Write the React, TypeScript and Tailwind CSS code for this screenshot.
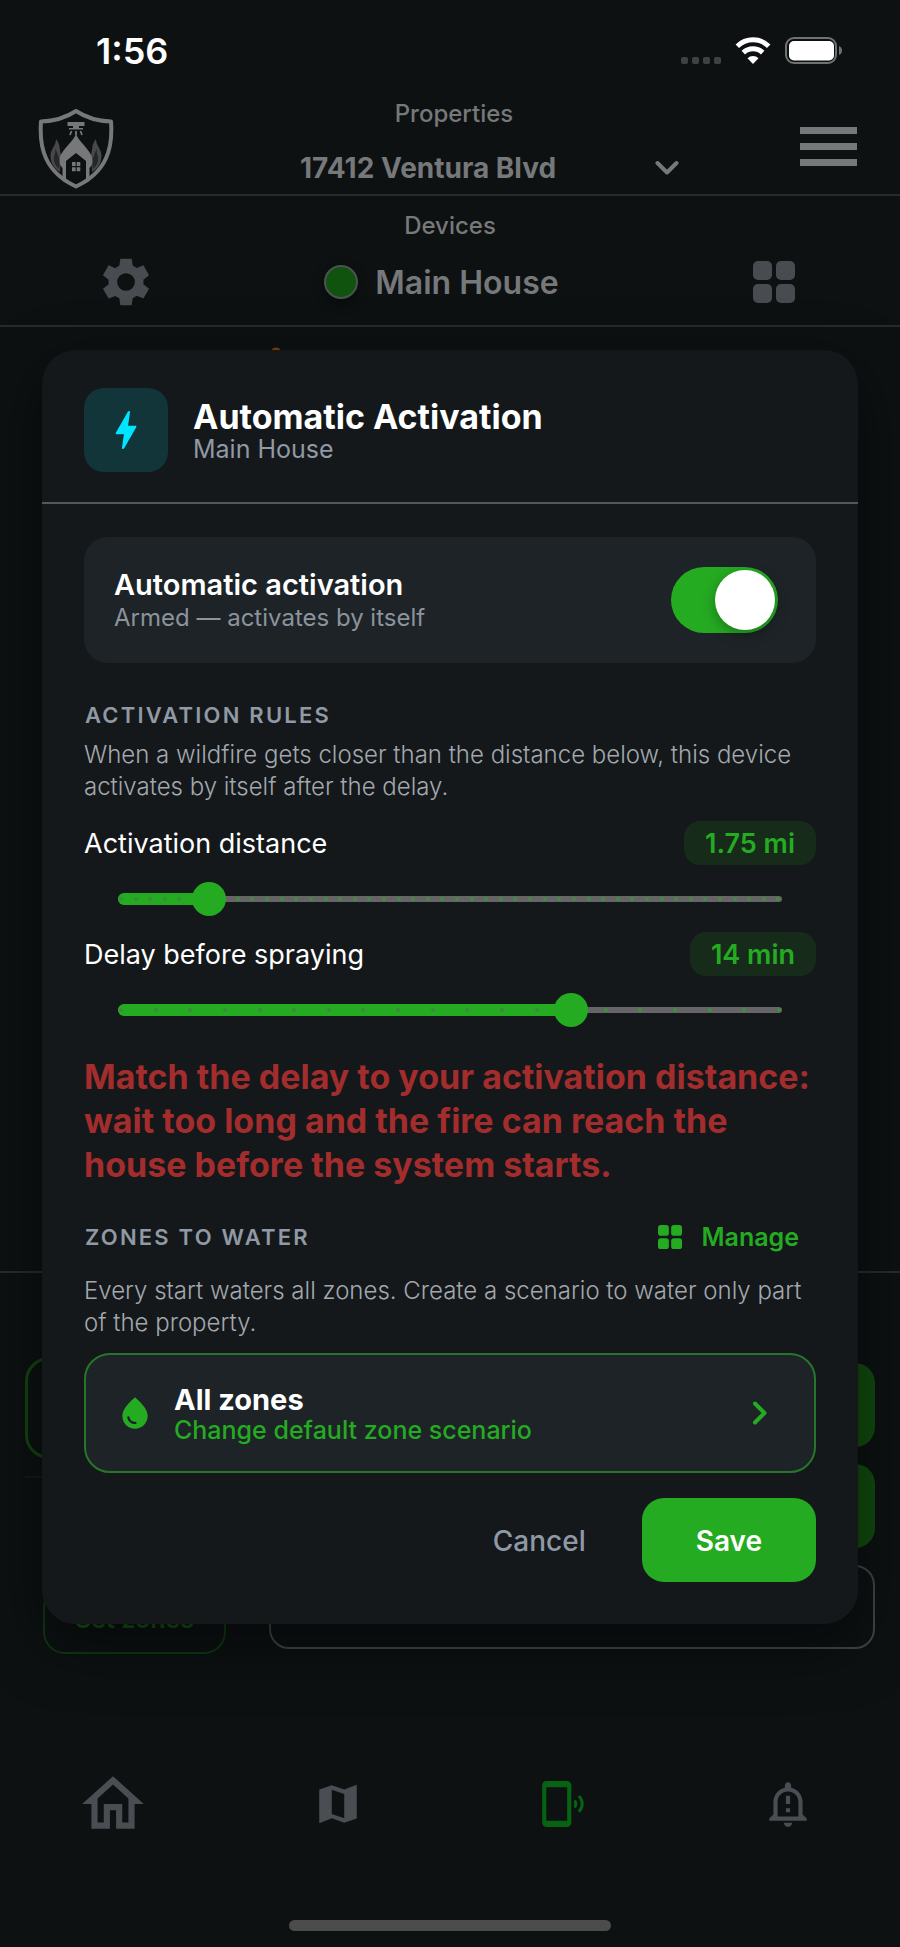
import { useState } from 'react'
import { MdBolt, MdOutlineHome, MdOutlineNotificationImportant, MdPhonelinkRing, MdWaterDrop } from 'react-icons/md'

const GridIcon = (props: any) => {
	const { className } = props

	return (
		<svg viewBox="0 0 42 42" className={className} fill="currentColor" aria-hidden="true">
			<rect x="0" y="0" width="19" height="19" rx="5" />
			<rect x="23" y="0" width="19" height="19" rx="5" />
			<rect x="0" y="23" width="19" height="19" rx="5" />
			<rect x="23" y="23" width="19" height="19" rx="5" />
		</svg>
	)
}

const GearIcon = () => (
	<svg viewBox="0 0 24 24" className="size-14" fill="currentColor" aria-hidden="true">
		<path fillRule="evenodd" d="M19.430 12.990c.04-.33.08-.67.08-1.010 0-.34-.03-.66-.07-.97l2.450-1.920-2.430-4.220-2.870 1.160c-.52-.4-1.090-.74-1.700-1L14.440 2H9.570l-.44 3.070c-.61.26-1.180.6-1.700 1L4.550 4.870 2.110 9.090l2.450 1.920c-.04.33-.07.65-.07.99 0 .34.03.68.08 1.010l-2.430 1.910 2.430 4.200 2.880-1.150c.52.4 1.090.74 1.700 1L9.580 22h4.850l.44-3.070c.61-.26 1.190-.6 1.710-1l2.880 1.150 2.430-4.200zM12 15.800a3.800 3.800 0 1 1 0-7.600 3.800 3.800 0 0 1 0 7.600z" />
	</svg>
)

const MapIcon = () => (
	<svg viewBox="0 0 24 24" className="size-[50px]" fill="currentColor" aria-hidden="true">
		<path d="M15 5.1 9 3 3 5.02v16.2l6-2.33 6 2.1 6-2.02V2.77L15 5.1zm0 13.79-6-2.11V5.11l6 2.11v11.67z" />
	</svg>
)

const Logo = () => (
	<svg viewBox="0 0 76 82" className="h-[82px] w-[76px]" role="img" aria-label="Home">
		<path d="M38 3C29 9 17 13 3 13.500C1 40 7 64 38 78.500C69 64 75 40 73 13.500C59 13 47 9 38 3Z" fill="none" stroke="#77787a" strokeWidth="4" strokeLinejoin="round" />
		<path d="M29.500 14h17v4h-17zM35 18h6v2h4v1.500H31V20h4z" fill="#77787a" />
		<path d="M33.500 23l-1.500 4M38 23v4M42.500 23l1.500 4" stroke="#77787a" strokeWidth="1.800" />
		<path d="M18 31c0 7-6 10-5.500 18C13 56 17 61 22 64l1-18c-2-5 0-9-5-15z" fill="#464849" />
		<path d="M58 31c0 7 6 10 5.500 18C63 56 59 61 54 64l-1-18c2-5 0-9 5-15z" fill="#464849" />
		<path d="M17 41c1 5-2 7-1 12 1 4 3 6 5 8l1-10c-3-3-2-7-5-10zM59 41c-1 5 2 7 1 12-1 4-3 6-5 8l-1-10c3-3 2-7 5-10z" fill="#25282a" />
		<path d="M38 25c-1 8-16 17-16.500 27 0 4 1 6 3 8v13l3.500 2V53l10-8 10 8v22l3.500-2V60c2-2 3-4 3-8C54 42 39 33 38 25Z" fill="#77787a" />
		<path d="M34 54h3.600v4H34zM38.700 54h3.600v4h-3.600zM34 59.200h3.600v4H34zM38.700 59.200h3.600v4h-3.600z" fill="#77787a" />
	</svg>
)

const StatusBar = () => (
	<div className="flex h-24 items-start justify-between pt-[31px] pr-[57px] pl-[96px] text-white">
		<span className="text-[36px] leading-10 font-semibold">1:56</span>
		<div className="flex items-end gap-[14px] pt-[6px]">
			<div className="flex gap-1">
				<span className="size-[7px] rounded-[2px] bg-[#3f4243]" />
				<span className="size-[7px] rounded-[2px] bg-[#3f4243]" />
				<span className="size-[7px] rounded-[2px] bg-[#3f4243]" />
				<span className="size-[7px] rounded-[2px] bg-[#3f4243]" />
			</div>
			<svg viewBox="0 0 36 27" className="h-[27px] w-9" fill="none" stroke="#fff" strokeWidth="5" aria-hidden="true">
				<path d="M2.300 9.200a22.500 22.500 0 0 1 31.400 0" />
				<path d="M8.300 15.600a14 14 0 0 1 19.400 0" />
				<path d="M18 27l-5.500-5.700a8 8 0 0 1 11 0z" fill="#fff" stroke="none" />
			</svg>
			<svg viewBox="0 0 58 27" className="h-[27px] w-[58px]" aria-hidden="true">
				<rect x="1" y="1" width="50" height="25" rx="8" fill="none" stroke="#6f7273" strokeWidth="2" />
				<rect x="4" y="4" width="45" height="19.500" rx="5" fill="#fff" />
				<path d="M54 9c4 1.500 4 7.500 0 9z" fill="#6f7273" />
			</svg>
		</div>
	</div>
)

const RuleSlider = (props: any) => {
	const { id, label, unit, min, max, step, value, onChange } = props
	const count = Math.round((max - min) / step)
	const index = Math.round((value - min) / step)
	const ticks = Array.from({ length: count + 1 }, (_, i) => i)

	return (
		<div>
			<div className="flex items-center justify-between">
				<label htmlFor={id} className="pt-[2px] text-[27px] leading-8 text-white">{label}</label>
				<output htmlFor={id} className="rounded-2xl bg-[#172b1b] px-[21px] pt-[7px] pb-[5px] text-[27px] leading-8 font-semibold text-[#25ab22]">
					{value} {unit}
				</output>
			</div>
			<div className="relative mx-5 mt-[17px] h-[34px]">
				<div className="absolute inset-x-[14px] top-[14px] h-[6px] rounded-full bg-[#656567]" />
				<div className="absolute inset-x-[14px] top-[11px] h-3">
					<div className="h-3 rounded-full bg-[#25ab22]" style={{ width: `${(index / count) * 100}%` }} />
				</div>
				<div className="absolute inset-x-[15px] top-[15px] flex justify-between">
					{ticks.map((i) => (
						<span key={i} className={i < index ? 'size-1 rounded-full bg-[#3f8a3d]' : 'size-1 rounded-full bg-[#3f8f40]'} />
					))}
				</div>
				<input
					id={id}
					type="range"
					min={min}
					max={max}
					step={step}
					value={value}
					onChange={(e) => { onChange(Number(e.target.value)) }}
					className="absolute inset-0 m-0 h-[34px] w-full cursor-pointer appearance-none bg-transparent [&::-webkit-slider-thumb]:size-[34px] [&::-webkit-slider-thumb]:appearance-none [&::-webkit-slider-thumb]:rounded-full [&::-webkit-slider-thumb]:bg-[#25ab22]"
				/>
			</div>
		</div>
	)
}

const ActivationDialog = () => {
	const [armed, setArmed] = useState(true)
	const [distance, setDistance] = useState(1.75)
	const [delay, setDelay] = useState(14)

	return (
		<div
			role="dialog"
			aria-labelledby="dialog-title"
			className="w-full rounded-[34px] bg-[#14181b] shadow-[0_20px_60px_rgba(0,0,0,0.5)]"
		>
			<div className="flex items-center gap-[25px] border-b-2 border-[#55585a] px-[42px] pt-[38px] pb-[30px]">
				<div className="flex size-[84px] shrink-0 items-center justify-center rounded-[20px] bg-[#12353a] text-[#00e5ff]">
					<MdBolt className="size-[50px]" />
				</div>
				<div className="pt-[2px]">
					<h1 id="dialog-title" className="text-[34px] leading-9 font-bold text-white">Automatic Activation</h1>
					<p className="text-[25px] leading-7 text-[#9099a4]">Main House</p>
				</div>
			</div>

			<div className="px-[42px] pt-[33px] pb-[42px]">
				<div className="flex items-center justify-between rounded-3xl bg-[#1d2327] py-[30px] pr-[38px] pl-[30px]">
					<label htmlFor="armed">
						<span className="block text-[29px] leading-9 font-semibold text-white">Automatic activation</span>
						<span className="block text-[24px] leading-[30px] text-[#8b939d]">Armed — activates by itself</span>
					</label>
					<div className="relative h-[66px] w-[107px] shrink-0">
						<input
							id="armed"
							type="checkbox"
							checked={armed}
							onChange={(e) => { setArmed(e.target.checked) }}
							className="peer block h-full w-full cursor-pointer appearance-none rounded-full bg-[#4b5054] checked:bg-[#25ab22]"
						/>
						<span className="pointer-events-none absolute top-[3px] left-[3px] size-[60px] rounded-full bg-white shadow-[0_4px_14px_rgba(0,0,0,0.3)] peer-checked:left-[44px]" />
					</div>
				</div>

				<h2 className="mt-[38px] pl-[1px] text-[22px] leading-7 font-semibold tracking-widest text-[#9099a4]">ACTIVATION RULES</h2>
				<p className="mt-[10px] text-[24px] leading-8 font-light text-[#a3a8ae]">
					When a wildfire gets closer than the distance below, this device activates by itself after the delay.
				</p>

				<div className="mt-[18px] flex flex-col gap-4">
					<RuleSlider id="distance" label="Activation distance" unit="mi" min={0.25} max={11.5} step={0.25} value={distance} onChange={setDistance} />
					<RuleSlider id="delay" label="Delay before spraying" unit="min" min={1} max={20} step={1} value={delay} onChange={setDelay} />
				</div>

				<p className="mt-7 text-[34px] leading-[44px] font-bold text-[#a32d2d]">
					Match the delay to your activation distance: wait too long and the fire can reach the house before the system starts.
				</p>

				<div className="mt-[26px] flex items-center justify-between">
					<h2 className="pl-[1px] text-[22px] leading-7 font-semibold tracking-widest text-[#9099a4]">ZONES TO WATER</h2>
					<button type="button" className="flex h-12 items-center gap-5 pr-[17px] text-[25px] leading-8 font-semibold text-[#25ab22]">
						<GridIcon className="size-6" />
						Manage
					</button>
				</div>
				<p className="mt-[14px] text-[24px] leading-8 font-light text-[#a3a8ae]">
					Every start waters all zones. Create a scenario to water only part of the property.
				</p>

				<button type="button" className="mt-[14px] flex h-[120px] w-full items-center gap-5 rounded-[26px] border-2 border-[#26762a] bg-[#1d2327] pr-[46px] pl-[30px] text-left">
					<MdWaterDrop className="size-[38px] shrink-0 text-[#25ab22]" />
					<span className="flex-1 pt-[2px]">
						<span className="block text-[29px] leading-8 font-bold text-white">All zones</span>
						<span className="block text-[25px] leading-7 font-medium text-[#25ab22]">Change default zone scenario</span>
					</span>
					<svg viewBox="0 0 16 24" className="h-6 w-4" fill="none" stroke="#25ab22" strokeWidth="4" strokeLinecap="round" strokeLinejoin="round" aria-hidden="true">
						<path d="M3 2.500 12.500 12 3 21.500" />
					</svg>
				</button>

				<div className="mt-[25px] flex justify-end gap-4">
					<button type="button" className="h-[84px] px-10 pt-[2px] text-[28px] font-medium text-[#8f98a5]">Cancel</button>
					<button type="button" className="h-[84px] rounded-[22px] bg-[#25ab22] px-[54px] pt-[2px] text-[28px] font-semibold text-white">Save</button>
				</div>
			</div>
		</div>
	)
}

export default function App() {
	return (
		<div className="relative flex min-h-screen flex-col bg-[#0d1112] font-['Inter',sans-serif] text-[#77787a]">
			<StatusBar />

			<header className="flex h-[100px] items-start border-b-2 border-[#282b2c] pr-[39px] pl-[38px]">
				<a href="#home" className="pt-3">
					<Logo />
				</a>
				<div className="flex flex-1 flex-col items-center gap-5 pt-[2px] pr-[2px]">
					<label htmlFor="property" className="text-[24px] leading-8 font-medium">Properties</label>
					<div className="relative w-full max-w-[466px]">
						<select id="property" className="block h-9 w-full appearance-none bg-transparent pl-[79px] text-[28px] leading-9 font-bold">
							<option>17412 Ventura Blvd</option>
						</select>
						<svg viewBox="0 0 24 16" className="pointer-events-none absolute top-[10px] right-2 h-4 w-6" fill="none" stroke="currentColor" strokeWidth="4" strokeLinecap="round" strokeLinejoin="round" aria-hidden="true">
							<path d="M2.500 3 12 12.500 21.500 3" />
						</svg>
					</div>
				</div>
				<button type="button" aria-label="Menu" className="mt-[31px] flex w-[65px] flex-col gap-[9px] px-1">
					<span className="h-[7px] w-full bg-current" />
					<span className="h-[7px] w-full bg-current" />
					<span className="h-[7px] w-full bg-current" />
				</button>
			</header>

			<section className="flex flex-col gap-3 border-b-2 border-[#282b2c] px-[98px] pt-[14px] pb-[15px]">
				<h2 className="text-center text-[24px] leading-8 font-medium">Devices</h2>
				<div className="flex items-center justify-between text-[#484b50]">
					<button type="button" aria-label="Settings">
						<GearIcon />
					</button>
					<div className="flex items-center gap-[17px] pr-[17px] text-[#77787a]">
						<span className="size-[34px] rounded-full border-2 border-[#4b5250] bg-[#10530e] shadow-[0_4px_12px_rgba(0,0,0,0.4)]" />
						<span className="pt-[2px] text-[32px] leading-10 font-semibold">Main House</span>
					</div>
					<button type="button" aria-label="Zones" className="flex size-14 items-center justify-center">
						<GridIcon className="size-[42px]" />
					</button>
				</div>
			</section>

			<main className="flex flex-1 flex-col">
				<div className="flex-1 pt-5 pl-[271px]">
					<svg viewBox="0 0 10 10" className="size-[10px]" fill="#7a4306" aria-hidden="true">
						<ellipse cx="5" cy="5" rx="5" ry="4.500" />
					</svg>
				</div>
				<div className="flex gap-[25px] border-t-2 border-[#282b2c] px-[25px] pt-[84px]">
					<div className="flex w-[219px] flex-col">
						<div className="h-[102px] rounded-[24px] border-[3px] border-[#13440f]" />
						<hr className="mt-[17px] border-t-2 border-[#14191a]" />
						<button type="button" className="mx-[18px] mt-[108px] flex h-[68px] items-center justify-center rounded-[22px] border-2 border-[#0f3a12] text-[25px] font-semibold text-[#145214]">
							Set zones
						</button>
					</div>
					<div className="flex flex-1 flex-col gap-[17px] pt-[6px]">
						<button type="button" aria-label="Start" className="h-[84px] rounded-[20px] bg-[#114a0f]" />
						<button type="button" aria-label="Schedule" className="h-[84px] rounded-[20px] bg-[#114a0f]" />
						<button type="button" aria-label="History" className="h-[84px] rounded-[20px] border-2 border-[#414445]" />
					</div>
				</div>
			</main>

			<nav className="grid grid-cols-4 pt-[110px] text-[#4a4d52]">
				<a href="#home" aria-label="Home" className="flex h-20 items-center justify-center"><MdOutlineHome className="size-[74px]" /></a>
				<a href="#map" aria-label="Map" className="flex h-20 items-center justify-center"><MapIcon /></a>
				<a href="#devices" aria-label="Devices" className="flex h-20 items-center justify-center text-[#066312]"><MdPhonelinkRing className="size-[50px]" /></a>
				<a href="#alerts" aria-label="Alerts" className="flex h-20 items-center justify-center"><MdOutlineNotificationImportant className="size-[50px]" /></a>
			</nav>
			<div className="flex justify-center pt-[76px] pb-4">
				<div className="h-[11px] w-[322px] rounded-full bg-[#4c4c4c]" />
			</div>

			<div className="absolute inset-0 flex items-center px-[42px] pt-[27px]">
				<ActivationDialog />
			</div>
		</div>
	)
}
